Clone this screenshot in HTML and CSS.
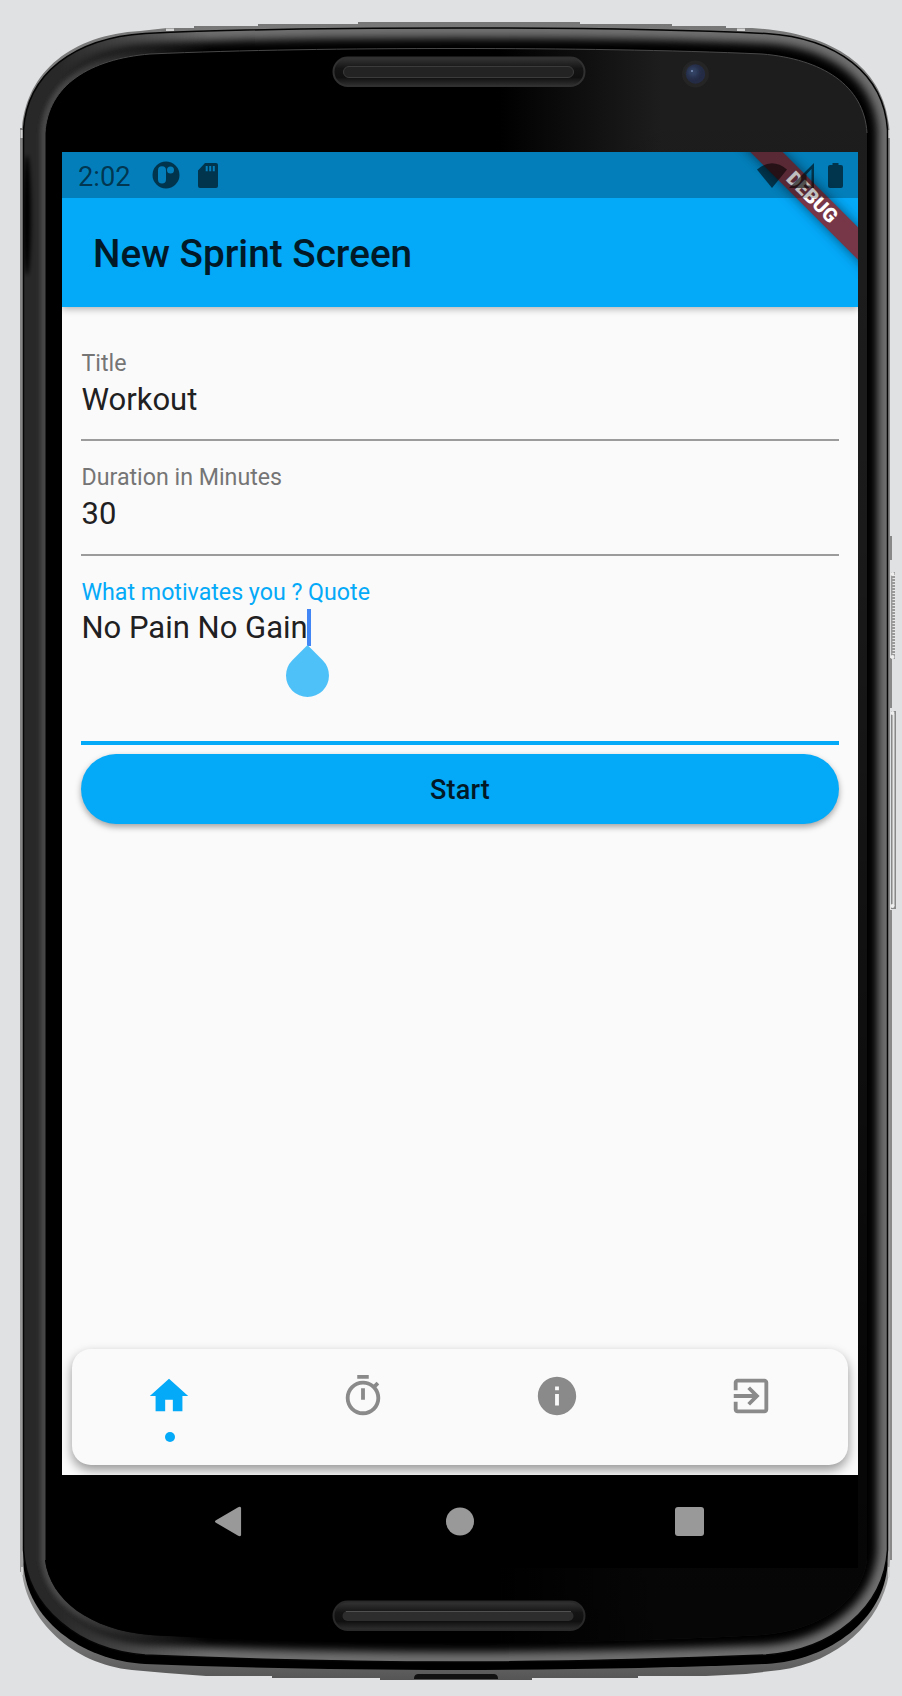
FILE: index.html
```html
<!DOCTYPE html>
<html lang="en">
<head>
<meta charset="utf-8">
<title>New Sprint Screen</title>
<link rel="stylesheet" href="styles.css">
</head>
<body>
<div class="device">
  <svg class="device-frame" viewBox="0 0 902 1696" aria-hidden="true">
    <defs>
      <path id="bezel" d="M23.5 130C27 74 74 38 145 33.5C240 29 350 28 455.500 28S670 29 766 33.500C837 38 884 74 887.500 130V1565C884 1618 832 1660 766 1664C670 1668 560 1670 455.500 1670S240 1668 145 1664C79 1660 27 1618 23.500 1565Z"/>
      <path id="bevel" d="M23.500 130C27 74 74 38 145 33.500C240 29 350 28 455.500 28S670 29 766 33.500C837 38 884 74 887.500 130V1550C884 1608 832 1650 766 1655C670 1659 560 1662 455.500 1662S240 1659 145 1655C79 1650 27 1608 23.500 1550Z"/>
      <path id="glass" d="M45 133C48 85 90 59 150 54C240 50 350 48.500 456 48.500S672 50 762 54C822 59 864 85 867 133V1560C862 1600 822 1630 762 1635C670 1640 560 1643 456 1643S240 1640 150 1635C90 1630 50 1600 45 1560Z"/>
      <clipPath id="bevelClip"><use href="#bevel"/></clipPath>
      <filter id="soft" x="-5%" y="-5%" width="110%" height="110%"><feGaussianBlur stdDeviation="4"/></filter>
      <filter id="soft2" x="-50%" y="-50%" width="200%" height="200%"><feGaussianBlur stdDeviation="2"/></filter>
      <linearGradient id="metal" x1="0" y1="0" x2="0" y2="1">
        <stop offset="0" stop-color="#777"/><stop offset=".08" stop-color="#858585"/>
        <stop offset=".5" stop-color="#858585"/><stop offset=".93" stop-color="#a0a0a0"/><stop offset=".98" stop-color="#707070"/><stop offset="1" stop-color="#555"/>
      </linearGradient>
      <linearGradient id="shine" gradientUnits="userSpaceOnUse" x1="500" y1="0" x2="660" y2="0">
        <stop offset="0" stop-color="#1d1d1d" stop-opacity="0"/><stop offset="1" stop-color="#1d1d1d"/>
      </linearGradient>
      <linearGradient id="shade" x1="0" y1="0" x2="0" y2="1">
        <stop offset="0" stop-color="#000" stop-opacity="0"/><stop offset=".3" stop-color="#000" stop-opacity=".1"/>
        <stop offset=".82" stop-color="#000" stop-opacity=".75"/><stop offset="1" stop-color="#000" stop-opacity=".8"/>
      </linearGradient>
      <linearGradient id="fade" gradientUnits="userSpaceOnUse" x1="60" y1="0" x2="210" y2="0">
        <stop offset="0" stop-color="#fff"/><stop offset="1" stop-color="#fff" stop-opacity="0"/>
      </linearGradient>
      <mask id="leftMask" maskUnits="userSpaceOnUse" x="0" y="0" width="902" height="1696"><rect width="902" height="1696" fill="url(#fade)"/></mask>
      <linearGradient id="slot" x1="0" y1="0" x2="0" y2="1">
        <stop offset="0" stop-color="#353535"/><stop offset=".38" stop-color="#151515"/>
        <stop offset=".7" stop-color="#101010"/><stop offset="1" stop-color="#303030"/>
      </linearGradient>
    </defs>
    <path fill="url(#metal)" d="M20 128H22C27 71 72 35 140 31L167 28H194V26H258V24H358V22H580V24H672V26H726V28H752C839 33 883 71 889 125L890 135V1560L889 1574C881 1622 838 1662 780 1670L746 1674L706 1676H638V1678H532V1680H380V1678H272V1676H206L166 1673L132 1670C72 1664 27 1620 22 1572H20Z"/>
    <path fill="#d4d4d4" d="M166 28.500h8v2.500h-8zM737 28.500h8v2.500h-8zM20.500 130h2.500v8h-2.500zM888 130h2v8h-2zM21 1567h2v8h-2zM888 1567h2v10h-2z"/>
    <path fill="#888" d="M890 536h2v24h-2zM890 658h2v50h-2zM890 910h2v650h-2z"/>
    <use href="#bezel" fill="#000"/>
    <g clip-path="url(#bevelClip)">
      <use href="#bevel" fill="none" stroke="#707070" stroke-width="20" filter="url(#soft)"/>
      <g mask="url(#leftMask)">
        <use href="#bevel" fill="#282828"/>
        <use href="#glass" fill="none" stroke="#484848" stroke-width="9" filter="url(#soft2)"/>
      </g>
      <ellipse cx="27" cy="215" rx="4" ry="60" fill="#000" filter="url(#soft2)"/>
    </g>
    <use href="#bevel" fill="none" stroke="#050505" stroke-width="1.500"/>
    <use href="#glass" fill="#000"/>
    <use href="#glass" fill="url(#shine)"/>
    <use href="#glass" fill="url(#shade)"/>
    <path fill="none" stroke="#484848" d="M45 1560V133C48 85 90 59 150 54C240 50 350 48.500 456 48.500S672 50 762 54C822 59 864 85 867 133"/>
    <g class="speaker">
      <rect x="333.500" y="57.500" width="251" height="28.500" rx="14.250" fill="url(#slot)" stroke="#303030" stroke-width="2"/>
      <rect x="343.500" y="66.500" width="230" height="11" rx="5.500" fill="#232323" stroke="#3b3b3b"/>
      <rect x="333.500" y="1601.500" width="251" height="28.500" rx="14.250" fill="url(#slot)" stroke="#292929" stroke-width="2"/>
      <rect x="342.500" y="1611" width="231" height="10" rx="5" fill="#2d2d2d"/>
      <path d="M346 1611.500H571" stroke="#505050"/>
    </g>
    <circle cx="695.500" cy="74" r="13.500" fill="#252525"/>
    <circle cx="695.500" cy="74" r="9.700" fill="#242c45"/>
    <circle cx="693" cy="72" r="5" fill="#344568" filter="url(#soft2)"/>
    <circle cx="692" cy="71" r="1" fill="#7e94bb"/>
    <path fill="#111" d="M414 1679c0-4 2-5 5-5h74c3 0 5 1 5 5z"/>
    <path fill="none" stroke="#555" d="M415 1679.500h82"/>
    <rect x="891" y="572" width="4" height="87" fill="#999"/>
    <path stroke="#e8e8e8" stroke-width="3" stroke-dasharray="1 2" d="M894 575V656"/>
    <rect x="891" y="711" width="5" height="198" fill="#888"/>
    <path stroke="#e5e5e5" stroke-width="2" d="M893.500 714V906"/>
    <g fill="#eee"><circle cx="892.500" cy="574" r="2"/><circle cx="892.500" cy="657" r="2"/><circle cx="892.500" cy="713" r="2"/><circle cx="892.500" cy="906" r="2"/></g>
  </svg>

  <main class="screen">
    <header class="header">
      <div class="status-bar">
        <span class="clock">2:02</span>
        <svg class="status-app" viewBox="0 0 28 28"><path fill-rule="evenodd" d="M14 .5a13.500 13.500 0 1 0 0 27a13.500 13.500 0 1 0 0-27zM10 5.300a4 4 0 0 1 4 4V18.500a4 4 0 0 1-8 0V9.300a4 4 0 0 1 4-4zM18.500 5.500a3.500 3.500 0 1 0 0 7a3.500 3.500 0 1 0 0-7z"/></svg>
        <svg class="status-card" viewBox="0 0 20 25"><path fill-rule="evenodd" d="M7 0H18a2 2 0 0 1 2 2V23a2 2 0 0 1-2 2H2a2 2 0 0 1-2-2V7.500zM7.700 3V8.200h2V3zM11.200 3V8.200h2V3zM14.800 3V8.200h2V3z"/></svg>
        <span class="status-gap"></span>
        <svg class="status-wifi" viewBox="0 0 30 25"><path d="M0 6.500Q15-6 30 6.500L15 25z"/></svg>
        <svg class="status-signal" viewBox="0 0 25 25"><path fill-rule="evenodd" d="M25 0V25H0zM22.500 6L17.500 11.200V22.500H22.500z"/></svg>
        <svg class="status-battery" viewBox="0 0 15 25"><path d="M4.500 0h6v2H13a2 2 0 0 1 2 2V23a2 2 0 0 1-2 2H2a2 2 0 0 1-2-2V4a2 2 0 0 1 2-2h2.500z"/></svg>
      </div>
      <h1 class="title">New Sprint Screen</h1>
      <div class="debug-ribbon">DEBUG</div>
    </header>

    <form class="form">
      <div class="field">
        <label class="label">Title</label>
        <div class="value">Workout</div>
      </div>
      <div class="field field-second">
        <label class="label">Duration in Minutes</label>
        <div class="value">30</div>
      </div>
      <div class="field field-active">
        <label class="label">What motivates you ? Quote</label>
        <div class="value"><span class="typed">No Pain No Gain<i class="caret"></i><i class="handle"></i></span></div>
      </div>
      <button class="start" type="button">Start</button>
    </form>

    <nav class="tabs">
      <a class="tab tab-on"><svg viewBox="0 0 24 24"><path d="M10 20v-6h4v6h5v-8h3L12 3 2 12h3v8z"/></svg><i class="dot"></i></a>
      <a class="tab"><svg viewBox="0 0 24 24"><path d="M15 1H9v2h6V1zm-4 13h2V8h-2v6zm8.030-6.610l1.420-1.420c-.43-.51-.9-.99-1.410-1.410l-1.420 1.420C16.070 4.740 14.120 4 12 4c-4.970 0-9 4.030-9 9s4.020 9 9 9 9-4.030 9-9c0-2.120-.74-4.070-1.970-5.610zM12 20c-3.870 0-7-3.130-7-7s3.130-7 7-7 7 3.130 7 7-3.130 7-7 7z"/></svg></a>
      <a class="tab"><svg viewBox="0 0 24 24"><path d="M12 2C6.480 2 2 6.480 2 12s4.480 10 10 10 10-4.480 10-10S17.520 2 12 2zm1 15h-2v-6h2v6zm0-8h-2V7h2v2z"/></svg></a>
      <a class="tab"><svg viewBox="0 0 24 24"><path d="M10.090 15.590L11.500 17l5-5-5-5-1.410 1.410L12.670 11H3v2h9.670l-2.580 2.590zM19 3H5c-1.110 0-2 .9-2 2v4h2V5h14v14H5v-4H3v4c0 1.100.89 2 2 2h14c1.100 0 2-.9 2-2V5c0-1.100-.9-2-2-2z"/></svg></a>
    </nav>

    <div class="system-nav">
      <svg viewBox="0 0 28 32"><path d="M2 14.500L24.500 1.200Q27 0 27.500 2V30Q27 32 24.500 30.800L2 17.500Q-1 16 2 14.500z"/></svg>
      <svg class="nav-home" viewBox="0 0 28 28"><circle cx="14" cy="14" r="14"/></svg>
      <svg viewBox="0 0 29 29"><rect width="29" height="29" rx="3"/></svg>
    </div>
  </main>
</div>
</body>
</html>
```
FILE: styles.css
```css
* { box-sizing: border-box; }

body {
  margin: 0;
  background: #e0e1e3;
  font-family: Roboto, "Liberation Sans", sans-serif;
  color: #1f2021;
}

.device {
  position: relative;
  width: 902px;
  height: 1696px;
  padding: 152px 44px 0 62px;
  overflow: hidden;
}

.device-frame {
  position: absolute;
  inset: 0;
  width: 902px;
  height: 1696px;
}

.screen {
  position: relative;
  display: flex;
  flex-direction: column;
  height: 1416px;
  background: #fafafa;
  overflow: hidden;
}

.header {
  position: relative;
  flex: none;
  height: 155px;
  background: #04a9f8;
  box-shadow: 0 2px 7px rgba(0, 0, 0, .3);
}

.status-bar {
  position: relative;
  z-index: 2;
  display: flex;
  align-items: center;
  height: 46px;
  padding: 0 15px 0 16px;
  background: rgba(0, 0, 0, .25);
}
.status-bar svg { flex: none; fill: rgba(0, 0, 0, .58); }
.clock { width: 74px; font-size: 27.300px; line-height: 46px; padding-top: 3px; color: rgba(0, 0, 0, .58); }
.status-app { width: 28px; height: 28px; }
.status-card { width: 20px; height: 25px; margin-left: 18px; }
.status-gap { flex: 1; }
.status-wifi { width: 30px; height: 25px; }
.status-signal { width: 25px; height: 25px; margin-left: 2px; }
.status-battery { width: 15px; height: 25px; margin-left: 14px; }

.title {
  margin: 0;
  padding-left: 31px;
  font-size: 38.700px;
  font-weight: 500;
  line-height: 112px;
  color: #021a27;
}

.debug-ribbon {
  position: absolute;
  top: 34px;
  right: -54px;
  width: 200px;
  height: 23px;
  transform: rotate(45deg);
  background: #773748;
  box-shadow: 0 0 12px rgba(0, 0, 0, .5);
  color: #fff;
  font-size: 19.700px;
  font-weight: 900;
  line-height: 23px;
  text-align: center;
}

.form {
  display: flex;
  flex-direction: column;
  flex: 1;
  padding: 20px 19px 0;
}
.field {
  display: flex;
  flex-direction: column;
  gap: 5px;
  height: 114px;
  padding: 22px 0 0 .5px;
  border-bottom: 2px solid #9b9b9b;
}
.field-second { height: 115px; }
.label { font-size: 23.200px; line-height: 28px; color: #757575; }
.value { font-size: 31px; line-height: 36px; }
.field-active { gap: 4px; height: 188.500px; border-bottom: 4px solid #04a9f8; }
.field-active .label { color: #04a9f8; }
.typed { position: relative; }
.caret {
  position: absolute;
  left: calc(100% - .5px);
  top: 0;
  width: 4px;
  height: 37px;
  background: #4285f4;
}
.handle {
  position: absolute;
  left: calc(100% - 21.500px);
  top: 44.500px;
  width: 43px;
  height: 43px;
  border-radius: 0 50% 50% 50%;
  background: #4fc1f9;
  transform: rotate(45deg);
}
.start {
  height: 70px;
  margin-top: 9.500px;
  border: 0;
  border-radius: 35px;
  background: #04a9f8;
  box-shadow: 0 3px 6px rgba(0, 0, 0, .35);
  font: 500 27px/70px Roboto, "Liberation Sans", sans-serif;
  letter-spacing: .2px;
  color: #021a27;
  padding: 1px 0 0;
}

.tabs {
  display: grid;
  grid-template-columns: repeat(4, 1fr);
  flex: none;
  height: 116px;
  margin: 0 10px 10px 9.500px;
  border-radius: 19px;
  background: #fafafa;
  box-shadow: 0 5px 11px rgba(0, 0, 0, .4);
}
.tab {
  display: flex;
  flex-direction: column;
  align-items: center;
  padding-top: 24px;
  fill: #8a8a8a;
}
.tab svg { width: 46px; height: 46px; }
.tab-on { fill: #04a9f8; }
.dot { width: 10px; height: 10px; margin: 13px 0 0 2px; border-radius: 50%; background: #04a9f8; }

.system-nav {
  display: flex;
  flex: none;
  align-items: center;
  justify-content: space-between;
  height: 93px;
  padding: 0 154px 0 152px;
  background: #000;
  fill: #999;
}
.system-nav svg { width: 28px; height: 31px; }
.system-nav svg:last-child { width: 29px; height: 29px; }
.system-nav .nav-home { margin-left: 2px; }
```
